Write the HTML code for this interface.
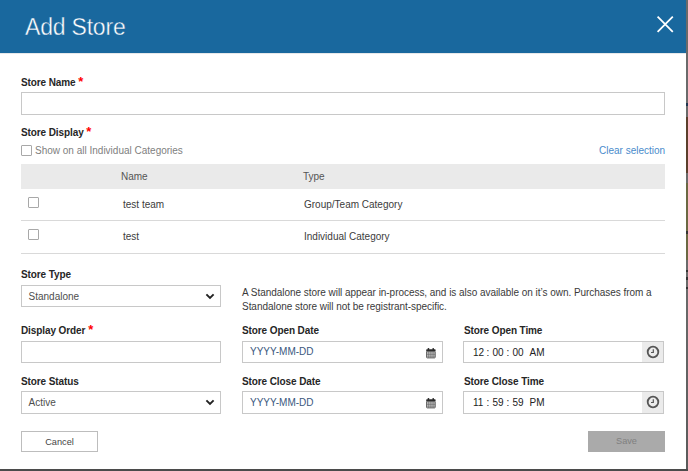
<!DOCTYPE html>
<html>
<head>
<meta charset="utf-8">
<style>
html,body{margin:0;padding:0;}
body{width:688px;height:471px;position:relative;overflow:hidden;background:#fff;font-family:"Liberation Sans",sans-serif;color:#222;}
.abs{position:absolute;}
#strip{position:absolute;left:686px;top:0;width:2px;height:471px;background:linear-gradient(#6a6a6a 0,#6a6a6a 280px,#5a5a5a 471px);}
#bottom{position:absolute;left:0;top:469px;width:688px;height:2px;background:#4b4b4b;}
#hdr{position:absolute;left:0;top:0;width:686px;height:53px;background:#19689e;}
#title{position:absolute;left:25px;top:14px;font-size:23px;line-height:26px;color:#fff;letter-spacing:-0.2px;white-space:nowrap;-webkit-text-stroke:0.4px #19689e;}
.lbl{position:absolute;margin-top:1px;font-size:10px;line-height:12px;font-weight:bold;color:#262626;letter-spacing:-0.1px;white-space:nowrap;}
.req{color:#f00;display:inline-block;transform:translate(0.8px,-0.5px) scale(1.3);}
.box{position:absolute;box-sizing:border-box;border:1px solid #c8c8c8;background:#fff;}
.txt{position:absolute;font-size:10px;line-height:12px;white-space:nowrap;color:#3c3c3c;}
.cb{position:absolute;box-sizing:border-box;width:11px;height:11px;border-radius:1px;border:1px solid #a8a8a8;background:#fff;}
.line{position:absolute;height:1px;background:#d9d9d9;}
.chev{position:absolute;width:12px;height:8px;}
</style>
</head>
<body>
<div id="hdr"></div>
<div class="abs" style="left:0;top:53px;width:686px;height:1px;background:#e6e8ea"></div>
<div id="title">Add Store</div>
<svg class="abs" style="left:656px;top:15px" width="19" height="19" viewBox="0 0 19 19">
  <path d="M1.6 1.6 L16.8 16.8 M16.8 1.6 L1.6 16.8" stroke="#fff" stroke-width="1.8" fill="none"/>
</svg>

<!-- Store Name -->
<div class="lbl" style="left:21px;top:76px">Store Name <span class="req">*</span></div>
<div class="box" style="left:21px;top:92px;width:644px;height:23px"></div>

<!-- Store Display -->
<div class="lbl" style="left:21px;top:126px">Store Display <span class="req">*</span></div>
<div class="cb" style="left:21px;top:145px"></div>
<div class="txt" style="left:35px;top:145px;color:#808080">Show on all Individual Categories</div>
<div class="txt" style="left:599px;top:145px;color:#4a8ccc">Clear selection</div>

<!-- table -->
<div class="abs" style="left:21px;top:164px;width:644px;height:25px;background:#eaeaea"></div>
<div class="txt" style="left:121px;top:171px;color:#555">Name</div>
<div class="txt" style="left:303px;top:171px;color:#555">Type</div>

<div class="cb" style="left:28px;top:197px"></div>
<div class="txt" style="left:123px;top:199px">test team</div>
<div class="txt" style="left:304px;top:199px">Group/Team Category</div>
<div class="line" style="left:21px;top:220px;width:644px"></div>

<div class="cb" style="left:28px;top:229px"></div>
<div class="txt" style="left:123px;top:231px">test</div>
<div class="txt" style="left:304px;top:231px">Individual Category</div>
<div class="line" style="left:21px;top:253px;width:644px"></div>

<!-- Store Type -->
<div class="lbl" style="left:21px;top:268px">Store Type</div>
<div class="box" style="left:21px;top:285px;width:200px;height:22px"></div>
<div class="txt" style="left:28.5px;top:291px;color:#4e4e4e">Standalone</div>
<svg class="chev" style="left:204px;top:292px" viewBox="0 0 12 8"><path d="M2.4 2.3 L6 5.9 L9.6 2.3" stroke="#222" stroke-width="1.9" fill="none"/></svg>

<div class="txt" style="left:242px;top:286px;line-height:14px;color:#3a3a3a;letter-spacing:-0.04px">A Standalone store will appear in-process, and is also available on it&#8217;s own. Purchases from a<br>Standalone store will not be registrant-specific.</div>

<!-- Row 2 -->
<div class="lbl" style="left:21px;top:324px">Display Order <span class="req">*</span></div>
<div class="box" style="left:21px;top:341px;width:200px;height:22px"></div>

<div class="lbl" style="left:242px;top:324px">Store Open Date</div>
<div class="box" style="left:242px;top:341px;width:201px;height:22px"></div>
<div class="txt" style="left:250px;top:346px;color:#3a587e">YYYY-MM-DD</div>
<svg class="abs cal" style="left:426.2px;top:347.6px" width="10" height="11" viewBox="0 0 10 11"><rect x="1.7" y="0" width="1.5" height="2.2" rx="0.6" fill="#2a2a2a"/><rect x="6.5" y="0" width="1.5" height="2.2" rx="0.6" fill="#2a2a2a"/><rect x="0.2" y="1.3" width="9.4" height="2.1" rx="0.7" fill="#2a2a2a"/><rect x="0.6" y="3.3" width="8.6" height="6.6" rx="0.6" fill="#e4e4e4" stroke="#3a3a3a" stroke-width="0.8"/><path d="M2.75 3.3V9.9M4.9 3.3V9.9M7.05 3.3V9.9M0.6 5H9.2M0.6 6.6H9.2M0.6 8.2H9.2" stroke="#555" stroke-width="0.6"/></svg>

<div class="lbl" style="left:464px;top:324px">Store Open Time</div>
<div class="box" style="left:463px;top:341px;width:201px;height:22px"></div>
<div class="abs" style="left:642px;top:342px;width:21px;height:20px;background:#ebebeb"></div>
<svg class="abs" style="left:645.8px;top:344.9px" width="14" height="14" viewBox="0 0 14 14"><circle cx="7" cy="7" r="5.3" fill="none" stroke="#555" stroke-width="1.8"/><path d="M7.3 4.2V7.5H5" fill="none" stroke="#555" stroke-width="1.2"/></svg>
<div class="txt" style="left:473px;top:347px;color:#222">12</div>
<div class="txt" style="left:486.5px;top:347px;color:#222">:</div>
<div class="txt" style="left:492.5px;top:347px;color:#222">00</div>
<div class="txt" style="left:506.5px;top:347px;color:#222">:</div>
<div class="txt" style="left:512.5px;top:347px;color:#222">00</div>
<div class="txt" style="left:529.5px;top:347px;color:#222">AM</div>

<!-- Row 3 -->
<div class="lbl" style="left:21px;top:375px">Store Status</div>
<div class="box" style="left:21px;top:391px;width:200px;height:23px"></div>
<div class="txt" style="left:28.5px;top:397px;color:#4e4e4e">Active</div>
<svg class="chev" style="left:204px;top:398px" viewBox="0 0 12 8"><path d="M2.4 2.3 L6 5.9 L9.6 2.3" stroke="#222" stroke-width="1.9" fill="none"/></svg>

<div class="lbl" style="left:242px;top:375px">Store Close Date</div>
<div class="box" style="left:242px;top:391px;width:201px;height:23px"></div>
<div class="txt" style="left:250px;top:397px;color:#3a587e">YYYY-MM-DD</div>
<svg class="abs cal" style="left:426.2px;top:397.8px" width="10" height="11" viewBox="0 0 10 11"><rect x="1.7" y="0" width="1.5" height="2.2" rx="0.6" fill="#2a2a2a"/><rect x="6.5" y="0" width="1.5" height="2.2" rx="0.6" fill="#2a2a2a"/><rect x="0.2" y="1.3" width="9.4" height="2.1" rx="0.7" fill="#2a2a2a"/><rect x="0.6" y="3.3" width="8.6" height="6.6" rx="0.6" fill="#e4e4e4" stroke="#3a3a3a" stroke-width="0.8"/><path d="M2.75 3.3V9.9M4.9 3.3V9.9M7.05 3.3V9.9M0.6 5H9.2M0.6 6.6H9.2M0.6 8.2H9.2" stroke="#555" stroke-width="0.6"/></svg>

<div class="lbl" style="left:464px;top:375px">Store Close Time</div>
<div class="box" style="left:463px;top:391px;width:201px;height:23px"></div>
<div class="abs" style="left:642px;top:392px;width:21px;height:21px;background:#ebebeb"></div>
<svg class="abs" style="left:645.8px;top:395px" width="14" height="14" viewBox="0 0 14 14"><circle cx="7" cy="7" r="5.3" fill="none" stroke="#555" stroke-width="1.8"/><path d="M7.3 4.2V7.5H5" fill="none" stroke="#555" stroke-width="1.2"/></svg>
<div class="txt" style="left:473px;top:397px;color:#222">11</div>
<div class="txt" style="left:486.5px;top:397px;color:#222">:</div>
<div class="txt" style="left:492.5px;top:397px;color:#222">59</div>
<div class="txt" style="left:506.5px;top:397px;color:#222">:</div>
<div class="txt" style="left:512.5px;top:397px;color:#222">59</div>
<div class="txt" style="left:529.5px;top:397px;color:#222">PM</div>

<!-- buttons -->
<div class="box" style="left:21px;top:431px;width:77px;height:21px;border-color:#bdbdbd"></div>
<div class="txt" style="left:21px;top:436px;width:77px;text-align:center;color:#444;font-size:9.2px">Cancel</div>
<div class="abs" style="left:588px;top:431px;width:77px;height:21px;background:#aaaaaa"></div>
<div class="txt" style="left:588px;top:435px;width:77px;text-align:center;color:#808080;font-size:9.2px">Save</div>

<div id="strip"></div>
<div class="abs" style="left:686px;top:103px;width:2px;height:3px;background:#1f3550"></div>
<div class="abs" style="left:686px;top:117px;width:2px;height:56px;background:#5b3f2c"></div>
<div class="abs" style="left:686px;top:183px;width:2px;height:77px;background:#6b6842"></div>
<div class="abs" style="left:686px;top:231px;width:2px;height:3px;background:#333"></div>
<div class="abs" style="left:686px;top:270px;width:2px;height:2px;background:#333"></div>
<div class="abs" style="left:686px;top:277px;width:2px;height:3px;background:#333"></div>
<div class="abs" style="left:686px;top:287px;width:2px;height:2px;background:#333"></div>
<div id="bottom"></div>
</body>
</html>
